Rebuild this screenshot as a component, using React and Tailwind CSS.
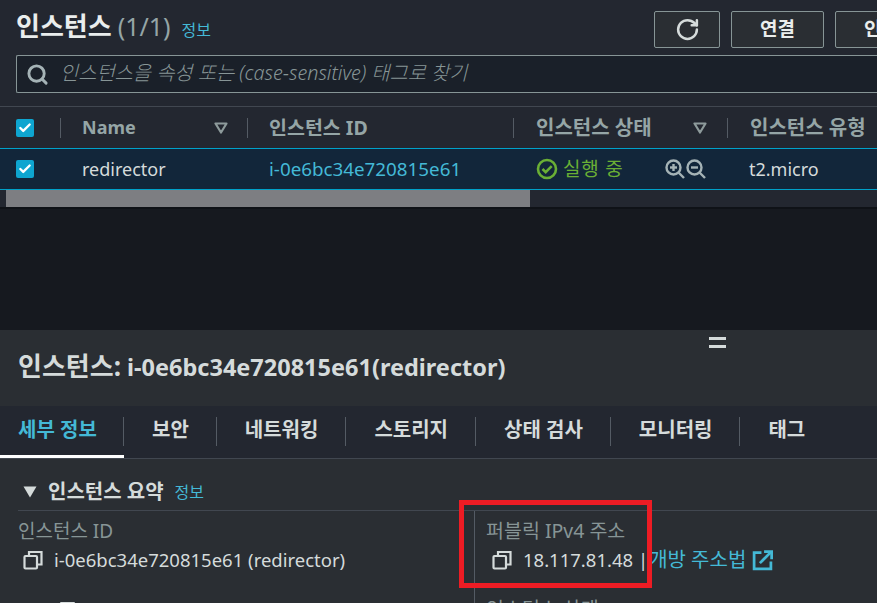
import React from 'react';
import { Search, RotateCw, Check } from 'lucide-react';

const FONT = 'font-["Noto_Sans","Noto_Sans_CJK_KR",sans-serif]';

const Checkbox = () => (
  <div className="w-[18px] h-[18px] rounded-[2px] bg-[#0ea5d0] flex items-center justify-center">
    <Check className="w-[14px] h-[14px] text-white" strokeWidth={4} />
  </div>
);

const SortTriangle = () => (
  <svg width="14" height="12" viewBox="0 0 14 12" className="text-[#8d9a9b]">
    <path d="M1.5 1.5h11L7 10.5z" fill="none" stroke="currentColor" strokeWidth="2.2" strokeLinejoin="round" />
  </svg>
);

const CopyIcon = () => (
  <svg width="20" height="20" viewBox="0 0 20 20" fill="none" stroke="#d5dbdb" strokeWidth="2.2" className="shrink-0">
    <rect x="1.5" y="6" width="12.5" height="12.5" rx="1" />
    <path d="M6 6V2h12.5v12.5H14" />
  </svg>
);

const ZoomIcon = ({ plus }) => (
  <svg width="20" height="20" viewBox="0 0 20 20" fill="none" stroke="#a5b3b6" strokeWidth="2.4">
    <circle cx="8.5" cy="8.5" r="7" />
    <path d="M13.5 13.5 19 19" />
    <path d="M5 8.5h7" />
    {plus && <path d="M8.5 5v7" />}
  </svg>
);

const ExternalIcon = () => (
  <svg width="21" height="21" viewBox="0 0 20 20" fill="none" stroke="#44b9d6" strokeWidth="2.6">
    <path d="M9 2.5H2v15.5h16v-7" />
    <path d="M7.5 12.5 18 2" />
    <path d="M11.5 1.5h7.2v7.2" />
  </svg>
);

const tabs = ['세부 정보', '보안', '네트워킹', '스토리지', '상태 검사', '모니터링', '태그'];

export default function App() {
  return (
    <div className={`${FONT} relative w-[877px] h-[603px] overflow-hidden bg-[#16191f] text-[#d5dbdb]`}>
      {/* instance list panel */}
      <div className="h-[207px] bg-[#232730]">
        <div className="h-[55px] pl-4 flex items-start justify-between">
          <div className="flex items-baseline pt-[9px]">
            <span className="text-[26px] leading-[34px] font-bold text-[#eaeded]">인스턴스</span>
            <span className="ml-[6px] text-[25px] leading-[34px] text-[#95a5a6]">(1/1)</span>
            <span className="ml-[11px] text-[16px] text-[#44b9d6]">정보</span>
          </div>
          <div className="flex gap-[11px] pt-[11px] -mr-[42px]">
            <button className="w-[66px] h-[37px] rounded-[2px] border border-[#879596] bg-[#2a2e33] flex items-center justify-center">
              <RotateCw className="w-[25px] h-[25px] text-[#d5dbdb]" strokeWidth={2.4} />
            </button>
            <button className="w-[93px] h-[37px] rounded-[2px] border border-[#879596] bg-[#2a2e33] text-[19px] font-bold text-[#eaeded]">연결</button>
            <button className="w-[84px] h-[37px] rounded-[2px] border border-[#879596] bg-[#2a2e33] text-[19px] font-bold text-[#eaeded] text-left pl-7 whitespace-nowrap overflow-hidden">인</button>
          </div>
        </div>
        <div className="ml-4 h-[38px] border border-[#879596] rounded-l-[2px] border-r-0 bg-[#1a2029] flex items-center pl-[9px]">
          <Search className="w-[23px] h-[23px] text-[#a5b3b6]" strokeWidth={3} />
          <span className="ml-[11px] -mt-[2px] text-[19.8px] italic font-light text-[#879596] whitespace-nowrap">인스턴스을 속성 또는 (case-sensitive) 태그로 찾기</span>
        </div>

        {/* table header */}
        <div className="mt-[13px] h-[42px] border-t border-[#414750] flex items-center font-bold text-[#95a5a6]">
          <div className="w-[61px] h-5 pl-4 flex items-center border-r border-[#545b64]"><Checkbox /></div>
          <div className="w-[187px] h-5 pl-[21px] pr-[19px] flex items-center justify-between border-r border-[#545b64] text-[18px]">
            <span>Name</span>
            <SortTriangle />
          </div>
          <div className="w-[266px] h-5 pl-[21px] flex items-center border-r border-[#545b64] text-[19.5px] whitespace-nowrap">인스턴스 ID</div>
          <div className="w-[214px] h-5 pl-[22px] pr-[20px] flex items-center justify-between border-r border-[#545b64] text-[20px]">
            <span className="whitespace-nowrap">인스턴스 상태</span>
            <SortTriangle />
          </div>
          <div className="pl-[22px] whitespace-nowrap text-[20px]">인스턴스 유형</div>
        </div>

        {/* selected row */}
        <div className="h-[42px] border-y border-[#00a1c9] bg-[#12263a] flex items-center text-[18px]">
          <div className="w-[61px] pl-4 flex items-center"><Checkbox /></div>
          <div className="w-[187px] pl-[21px] text-[#d5dbdb]">redirector</div>
          <div className="w-[266px] pl-[21px] text-[18.8px] text-[#44b9d6]">i-0e6bc34e720815e61</div>
          <div className="w-[214px] pl-[22px] flex items-center">
            <svg width="22" height="22" viewBox="0 0 22 22" fill="none" stroke="#6aaf35" strokeWidth="2.6" className="shrink-0">
              <circle cx="11" cy="11" r="9" />
              <path d="M6.5 11l3.2 3.2 6-6" />
            </svg>
            <span className="ml-[5px] text-[#6aaf35] text-[19px] tracking-[0.8px] whitespace-nowrap">실행 중</span>
            <span className="ml-auto mr-[22px] flex gap-[1px]">
              <ZoomIcon plus />
              <ZoomIcon />
            </span>
          </div>
          <div className="pl-[21px]">t2.micro</div>
        </div>

        {/* scrollbar */}
        <div className="h-[17px] pl-[6px]">
          <div className="w-[524px] h-full bg-[#7d7e82]" />
        </div>
      </div>

      <div className="h-[123px] border-t-2 border-[#0f1217]" />

      {/* details panel */}
      <div className="relative h-[273px] bg-[#2a2e33]">
        <div className="absolute left-[709px] top-[7px] w-[17px] h-[11px] border-y-[3px] border-[#d5dbdb]" />
        <div className="h-[76px] pl-[18px] pt-[17px] leading-[38px] font-bold text-[#d5dbdb] whitespace-nowrap">
          <span className="text-[26px]">인스턴스:</span>
          <span className="ml-[6px] text-[23.5px]">i-0e6bc34e720815e61(redirector)</span>
        </div>

        <div className="h-[53px] bg-[#232730] border-b border-[#414750] flex items-start">
          {tabs.map((tab, i) => (
            <div
              key={tab}
              className={
                i === 0
                  ? 'w-[124px] h-[52px] pl-[18px] border-b-[3px] border-white relative'
                  : 'px-[28px] h-[52px] relative'
              }
            >
              <div className={`pt-[10px] text-[20px] leading-[28px] font-bold whitespace-nowrap ${i === 0 ? 'text-[#44b9d6]' : 'text-[#d5dbdb]'}`}>
                {tab}
              </div>
              {i < tabs.length - 1 && <div className="absolute right-0 top-[11px] w-px h-[29px] bg-[#545b64]" />}
            </div>
          ))}
        </div>

        <div className="pl-[18px] pt-[19px]">
          <div className="flex items-center h-7">
            <svg width="14" height="12" viewBox="0 0 14 12" className="ml-[5px] shrink-0">
              <path d="M0.5 0.5h13L7 11.5z" fill="#d5dbdb" />
            </svg>
            <span className="ml-[11px] text-[20px] font-bold text-[#d5dbdb] whitespace-nowrap">인스턴스 요약</span>
            <span className="ml-[11px] text-[16px] text-[#44b9d6]">정보</span>
          </div>
          <div className="mt-[4px] border-t border-[#414750] grid grid-cols-[456px_1fr]">
            <div className="pt-[6px]">
              <div className="text-[19px] leading-[28px] text-[#879596]">인스턴스 ID</div>
              <div className="mt-[2px] pl-[5px] flex items-center gap-[11px] text-[18.5px] leading-[26px]">
                <CopyIcon />
                <span className="whitespace-nowrap">i-0e6bc34e720815e61 (redirector)</span>
              </div>
              <div className="mt-[29px] ml-[42px] w-[15px] h-[4px] rounded-t-[1px] bg-[#d5dbdb]" />
            </div>
            <div className="border-l border-[#545b64] pl-[11px] pt-[6px] h-[120px]">
              <div className="text-[19.5px] leading-[28px] text-[#879596] whitespace-nowrap">퍼블릭 IPv4 주소</div>
              <div className="mt-[2px] pl-[6px] flex items-center text-[18.5px] leading-[26px] whitespace-nowrap">
                <CopyIcon />
                <span className="ml-[11px]">18.117.81.48 |</span>
                <span className="ml-[1px] text-[20px] text-[#44b9d6]">개방 주소법</span>
                <span className="ml-[6px]"><ExternalIcon /></span>
              </div>
              <div className="mt-[22px] text-[19.5px] leading-[28px] text-[#879596] whitespace-nowrap">인스턴스 상태</div>
            </div>
          </div>
        </div>
      </div>

      {/* red highlight box */}
      <div className="absolute left-[459px] top-[500px] w-[193px] h-[88px] border-[5px] border-[#ed1c24]" />
    </div>
  );
}
